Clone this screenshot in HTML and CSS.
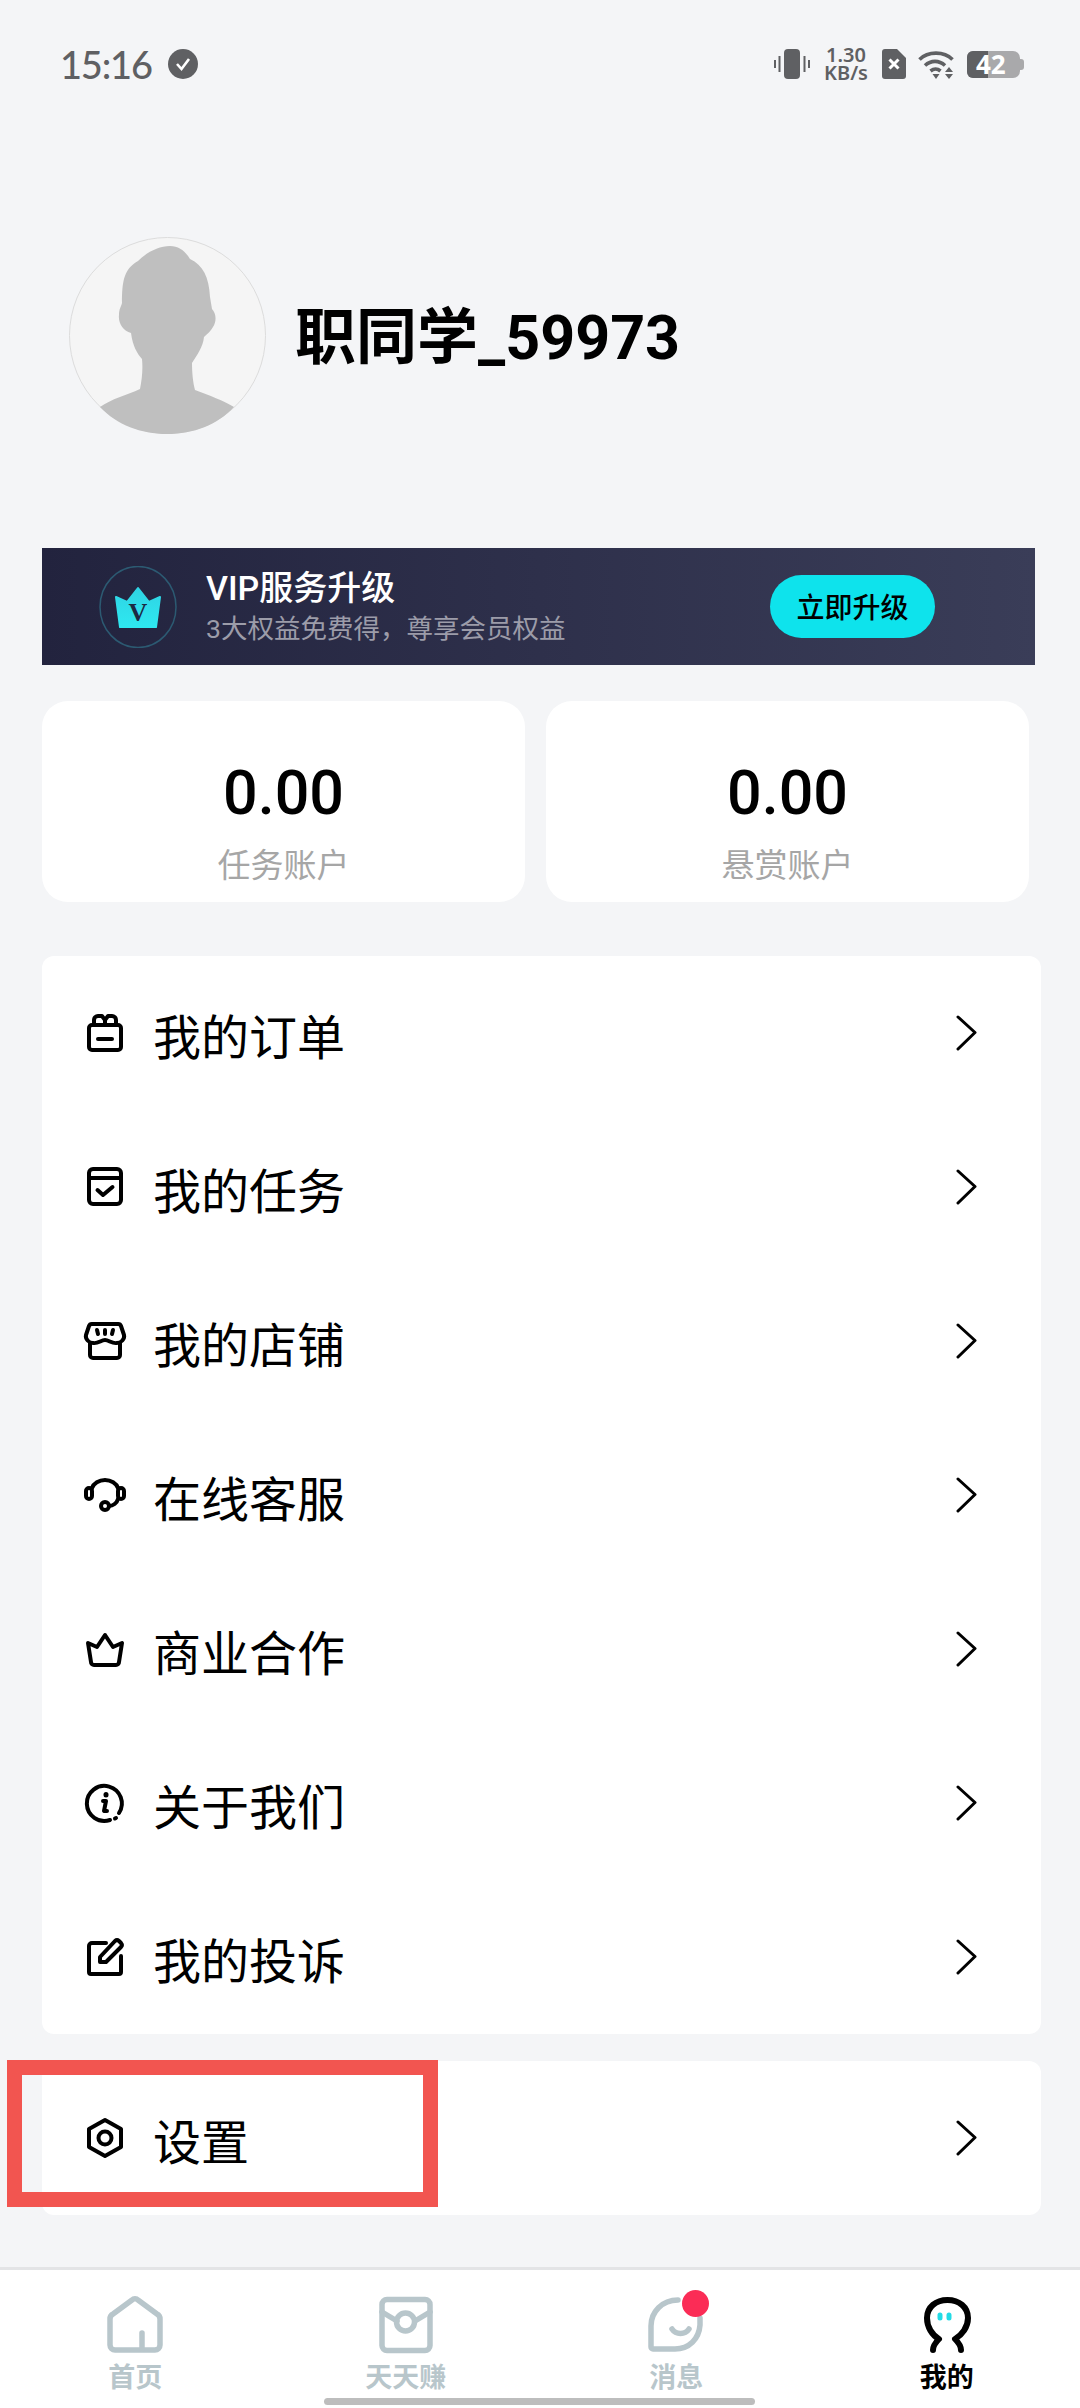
FILE: index.html
```html
<!DOCTYPE html>
<html lang="zh-CN">

<head>
    <meta charset="UTF-8">
    <meta name="viewport" content="width=device-width, initial-scale=1.0">
    <title>我的</title>
    <link rel="stylesheet" href="styles.css">
</head>

<body>
    <div id="wrap">
        <div class="status">
            <div class="statusLeft">
                <span class="time">15:16</span>
                <svg class="okIcon" viewBox="0 0 30 30"><circle cx="15" cy="15" r="15" fill="#5f6063"/><path d="M9 15l4.5 5L21 10" fill="none" stroke="#fff" stroke-width="2.6"/></svg>
            </div>
            <div class="statusRight">
                <svg class="vibIcon" viewBox="0 0 36 30"><rect x="10" y="0" width="16" height="30" rx="4" fill="#5f6063"/><path d="M1 11v8M5.5 7v16M30.5 7v16M35 11v8" stroke="#5f6063" stroke-width="2"/></svg>
                <div class="speed">1.30 KB/s</div>
                <svg class="simIcon" viewBox="0 0 24 30"><path d="M3 0h12l9 9v18a3 3 0 0 1-3 3H3a3 3 0 0 1-3-3V3a3 3 0 0 1 3-3z" fill="#5f6063"/><path d="M7.5 10.5l9 9M16.5 10.5l-9 9" stroke="#fff" stroke-width="3"/></svg>
                <svg class="wifiIcon" viewBox="0 0 37 29"><g fill="none" stroke="#5f6063" stroke-width="3.6"><path d="M1.5 9.5C10 1 26 1 34.5 9.5"/><path d="M7 15.5c6-5.5 14-5.5 20 0"/><path d="M12.5 21c3.2-2.5 7-2.5 10 0"/></g><path d="M14.5 24h7l-3.5 5zM27 22l4-5 4 5zM27 24h8l-4 5z" fill="#5f6063"/></svg>
                <div class="battery"><span class="batteryNub"></span><span class="batteryFill"></span><span class="batteryNum">42</span></div>
            </div>
        </div>

        <div class="profile">
            <svg class="avatar" viewBox="0 0 197 197">
                <circle cx="98.5" cy="98.5" r="98" fill="#f5f5f5" stroke="#dcdcdc"/>
                <path d="M31 170C42 162 58 158 71 152C73 142 74 132 73 122C68 116 64 110 62 96C54 94 49 86 50 78C50 72 52 70 53 66C53 44 55 32 69 24C78 15 90 9 101 9C110 9 116 14 121 22C134 28 140 40 141 60L143 72C147 76 148 84 144 90C142 94 138 97 135 100C134 110 128 118 123 126C123 136 124 146 126 153C140 158 155 164 165 170C148 188 125 197 98 197C72 197 48 188 31 170Z" fill="#bfbfbf"/>
            </svg>
            <div class="userName">职同学_59973</div>
        </div>

        <div class="vipBar">
            <svg class="vipIcon" viewBox="0 0 78 82">
                <defs><linearGradient id="crown" x1="0" y1="0" x2="0" y2="1"><stop offset="0" stop-color="#2fd3e4"/><stop offset="1" stop-color="#2ee8f0"/></linearGradient></defs>
                <ellipse cx="39" cy="41" rx="38" ry="40.5" fill="none" stroke="#2c5a72" stroke-width="1.5"/>
                <path d="M17 31l11 5 11-14 11 14 11-5-4 30H21z" fill="url(#crown)" stroke="url(#crown)" stroke-width="2" stroke-linejoin="round"/>
                <text x="39" y="55" class="vipV">V</text>
            </svg>
            <div class="vipText">
                <div class="vipTitle">VIP服务升级</div>
                <div class="vipSub">3大权益免费得，尊享会员权益</div>
            </div>
            <div class="vipBtn">立即升级</div>
        </div>

        <div class="stats">
            <div class="statCard">
                <div class="statNum">0.00</div>
                <div class="statName">任务账户</div>
            </div>
            <div class="statCard">
                <div class="statNum">0.00</div>
                <div class="statName">悬赏账户</div>
            </div>
        </div>

        <div class="menu">
            <div class="row">
                <svg class="rowIcon" viewBox="0 0 38 40"><path d="M3 15a3 3 0 0 1 3-3h26a3 3 0 0 1 3 3v19a3 3 0 0 1-3 3H6a3 3 0 0 1-3-3z"/><path d="M8 12V7a4 4 0 0 1 4-4h4l3 4v5M19 7l3-4h4a4 4 0 0 1 4 4v5"/><path d="M12 26h14"/></svg>
                <span class="rowName">我的订单</span>
                <svg class="arrow" viewBox="0 0 22 36"><path d="M3 2l17 15.5L3 34"/></svg>
            </div>
            <div class="row">
                <svg class="rowIcon" viewBox="0 0 38 40"><rect x="3" y="2" width="32" height="35" rx="4"/><path d="M3 11h32"/><path d="M11.5 23l5.5 5 9.5-8"/></svg>
                <span class="rowName">我的任务</span>
                <svg class="arrow" viewBox="0 0 22 36"><path d="M3 2l17 15.5L3 34"/></svg>
            </div>
            <div class="row">
                <svg class="rowIcon" viewBox="0 0 38 40"><path d="M6 3h26a3 3 0 0 1 3 2l3 9c1 4-3 8-7 8-5 1-8-3-12-3s-7 4-12 3c-4 0-8-4-7-8l3-9a3 3 0 0 1 3-2z"/><path d="M4 22v12a3 3 0 0 0 3 3h24a3 3 0 0 0 3-3V22"/><path d="M11 9l1 4M19 9v4M27 9l-1 4"/></svg>
                <span class="rowName">我的店铺</span>
                <svg class="arrow" viewBox="0 0 22 36"><path d="M3 2l17 15.5L3 34"/></svg>
            </div>
            <div class="row">
                <svg class="rowIcon" viewBox="0 0 38 40"><path d="M6 13a13.5 11 0 0 1 26 0"/><rect x="0" y="13" width="6" height="11" rx="3"/><rect x="32" y="13" width="6" height="11" rx="3"/><path d="M32 24c-1 4-5 7-9 7"/><circle cx="19" cy="31" r="4"/></svg>
                <span class="rowName">在线客服</span>
                <svg class="arrow" viewBox="0 0 22 36"><path d="M3 2l17 15.5L3 34"/></svg>
            </div>
            <div class="row">
                <svg class="rowIcon" viewBox="0 0 38 40"><path d="M2 14l9 4 8-12 8 12 9-4-3 19a3 3 0 0 1-3 3H8a3 3 0 0 1-3-3z"/></svg>
                <span class="rowName">商业合作</span>
                <svg class="arrow" viewBox="0 0 22 36"><path d="M3 2l17 15.5L3 34"/></svg>
            </div>
            <div class="row">
                <svg class="rowIcon" viewBox="0 0 38 40"><path d="M33 30A17.5 17.5 0 1 0 24 37"/><path d="M29 35.5l1-.5"/><path d="M17 18h3l-2 10h3"/><path class="thick" d="M20 11.5v.5"/></svg>
                <span class="rowName">关于我们</span>
                <svg class="arrow" viewBox="0 0 22 36"><path d="M3 2l17 15.5L3 34"/></svg>
            </div>
            <div class="row">
                <svg class="rowIcon" viewBox="0 0 38 40"><path d="M20 6H6a3 3 0 0 0-3 3v26a2 2 0 0 0 2 2h28a2 2 0 0 0 2-2V19"/><path d="M14 25v-5L29 4a3 3 0 0 1 4 0l2 2a3 3 0 0 1 0 4L20 25z"/></svg>
                <span class="rowName">我的投诉</span>
                <svg class="arrow" viewBox="0 0 22 36"><path d="M3 2l17 15.5L3 34"/></svg>
            </div>
        </div>

        <div class="menu setBox">
            <div class="row">
                <svg class="rowIcon" viewBox="0 0 38 40"><path d="M19 2l16 9v18l-16 9-16-9V11z"/><circle cx="19" cy="20" r="6.5"/></svg>
                <span class="rowName">设置</span>
                <svg class="arrow" viewBox="0 0 22 36"><path d="M3 2l17 15.5L3 34"/></svg>
            </div>
        </div>

        <div class="nav">
            <div class="tab">
                <svg class="tabIcon" viewBox="0 0 56 56"><path d="M3 22c0-2 1-4 3-5L25 3a4 4 0 0 1 6 0l19 14c2 1 3 3 3 5v26a5 5 0 0 1-5 5H8a5 5 0 0 1-5-5z"/><path d="M35 36v16"/></svg>
                <span>首页</span>
            </div>
            <div class="tab">
                <svg class="tabIcon" viewBox="0 0 56 56"><rect x="4" y="2.5" width="48" height="51" rx="5"/><path d="M4 15l15 9M52 15l-15 9"/><circle cx="27.5" cy="25" r="9"/></svg>
                <span>天天赚</span>
            </div>
            <div class="tab">
                <svg class="tabIcon" viewBox="0 0 56 56"><path d="M30 3C14 3 3 15 3 29v21a2 2 0 0 0 2 2h22c14 0 24-10 25-24V21"/><path d="M24 32c4 6 13 6 17 0"/></svg>
                <i class="redDot"></i>
                <span>消息</span>
            </div>
            <div class="tab on">
                <svg class="tabIcon" viewBox="0 0 56 56"><path d="M14 53c0-4 2-7 6-11C13 38 8 30 8 21C8 10 17 3 28.5 3S49 10 49 21C49 30 43 38 36 42c4 4 6 7 6 11"/><path class="eye" d="M21 18v3M30 18v3"/></svg>
                <span>我的</span>
            </div>
        </div>
        <div class="homeBar"></div>

        <div class="mark"></div>
    </div>
</body>

</html>
```

FILE: styles.css
```css
* {
    box-sizing: border-box;
}

body {
    margin: 0;
    background: #f4f5f7;
    font-family: Roboto, "Noto Sans CJK SC", sans-serif;
    color: #000;
}

#wrap {
    position: relative;
    display: flex;
    flex-direction: column;
    width: 1080px;
    height: 2408px;
    overflow: hidden;
}

.status {
    display: flex;
    justify-content: space-between;
    align-items: center;
    flex: none;
    height: 128px;
    padding: 0 60px;
    color: #5f6063;
}

.statusLeft {
    display: flex;
    align-items: center;
    gap: 22px;
}

.time {
    width: 86px;
    font: 500 38px/40px Lato, "Noto Sans", sans-serif;
    letter-spacing: -1.2px;
    white-space: nowrap;
}

.okIcon {
    width: 30px;
    height: 30px;
}

.statusRight {
    display: flex;
    align-items: center;
}

.vibIcon {
    width: 36px;
    height: 30px;
}

.speed {
    width: 46px;
    margin: 0 13px;
    font: 600 20px/18px "Noto Sans", sans-serif;
    text-align: center;
}

.simIcon {
    width: 24px;
    height: 30px;
    margin-right: 12px;
}

.wifiIcon {
    width: 37px;
    height: 29px;
    margin-right: 12px;
}

.battery {
    position: relative;
    width: 53px;
    height: 27px;
    background: #a9a9ab;
    border-radius: 6px 7px 7px 6px;
}

.batteryFill {
    position: absolute;
    left: 0;
    top: 0;
    width: 21px;
    height: 27px;
    background: #5f6063;
    border-radius: 6px 0 0 6px;
}

.batteryNub {
    position: absolute;
    right: -4px;
    top: 8px;
    width: 4px;
    height: 11px;
    background: #a9a9ab;
    border-radius: 0 3px 3px 0;
}

.batteryNum {
    position: absolute;
    left: 9px;
    top: 0;
    font: 700 26px/27px "Noto Sans", sans-serif;
    color: #fff;
}

.profile {
    display: flex;
    align-items: center;
    gap: 29px;
    flex: none;
    padding: 109px 0 0 69px;
}

.avatar {
    width: 197px;
    height: 197px;
}

.userName {
    font-size: 61px;
    line-height: 70px;
    font-weight: 700;
    margin-top: 4px;
}

.vipBar {
    display: flex;
    align-items: center;
    flex: none;
    height: 117px;
    margin: 114px 45px 0 42px;
    padding-left: 57px;
    background: linear-gradient(90deg, #22233e, #3a3d58);
}

.vipIcon {
    flex: none;
    width: 78px;
    height: 82px;
}

.vipV {
    font: 700 26px "Liberation Serif", serif;
    fill: #1c2a44;
    text-anchor: middle;
}

.vipText {
    flex: 1;
    margin-left: 29px;
    padding-top: 4px;
}

.vipTitle {
    font-size: 34px;
    line-height: 42px;
    font-weight: 500;
    color: #fff;
    margin-top: -4px;
}

.vipSub {
    margin-top: 3px;
    font-size: 26.5px;
    line-height: 34px;
    color: #9c9ca9;
}

.vipBtn {
    width: 165px;
    height: 63px;
    margin-right: 100px;
    background: #0ee3ec;
    border-radius: 32px;
    font-size: 28px;
    line-height: 67px;
    font-weight: 500;
    text-align: center;
}

.stats {
    display: grid;
    grid-template-columns: 1fr 1fr;
    gap: 21px;
    flex: none;
    margin: 36px 51px 0 42px;
}

.statCard {
    height: 201px;
    padding-top: 57px;
    background: #fff;
    border-radius: 26px;
    text-align: center;
}

.statNum {
    font-size: 61px;
    line-height: 70px;
    font-weight: 500;
}

.statName {
    margin-top: 16px;
    font-size: 33px;
    line-height: 44px;
    color: #a6a6a6;
}

.menu {
    flex: none;
    margin: 54px 39px 0 42px;
    background: #fff;
    border-radius: 12px;
}

.setBox {
    margin-top: 27px;
}

.row {
    display: flex;
    align-items: center;
    height: 154px;
    padding: 0 64px 0 44px;
}

.rowIcon {
    flex: none;
    width: 38px;
    height: 40px;
    overflow: visible;
    fill: none;
    stroke: #000;
    stroke-width: 4;
    stroke-linejoin: round;
    stroke-linecap: round;
}

.rowIcon .thick {
    stroke-width: 5;
}

.rowName {
    flex: 1;
    margin: 12px 0 0 29px;
    font-size: 48px;
    line-height: 60px;
}

.arrow {
    flex: none;
    width: 22px;
    height: 36px;
    fill: none;
    stroke: #000;
    stroke-width: 3;
    stroke-linecap: round;
    stroke-linejoin: round;
}

.nav {
    display: flex;
    flex: 1;
    margin-top: 52px;
    padding-top: 27px;
    background: #fff;
    border-top: 3px solid #e3e4e6;
}

.tab {
    position: relative;
    display: flex;
    flex-direction: column;
    align-items: center;
    flex: none;
    width: 270.5px;
    font-size: 27px;
    line-height: 36px;
    font-weight: 700;
    color: #b8c6cb;
}

.tabIcon {
    width: 56px;
    height: 56px;
    margin-bottom: 7px;
    overflow: visible;
    fill: none;
    stroke: #b8c6cb;
    stroke-width: 5.5;
    stroke-linecap: round;
    stroke-linejoin: round;
}

.on {
    color: #000;
}

.on .tabIcon {
    stroke: #000;
    stroke-width: 6;
}

.on .eye {
    stroke: #22dbe6;
    stroke-width: 5;
}

.redDot {
    position: absolute;
    left: 141px;
    top: -7px;
    width: 27px;
    height: 27px;
    background: #fb2c56;
    border-radius: 50%;
}

.homeBar {
    position: absolute;
    left: 324px;
    bottom: 3px;
    width: 431px;
    height: 7px;
    background: #bdbdbd;
    border-radius: 4px;
}

.mark {
    position: absolute;
    left: 7px;
    top: 2060px;
    width: 431px;
    height: 147px;
    border: 15px solid #f25550;
}
```
